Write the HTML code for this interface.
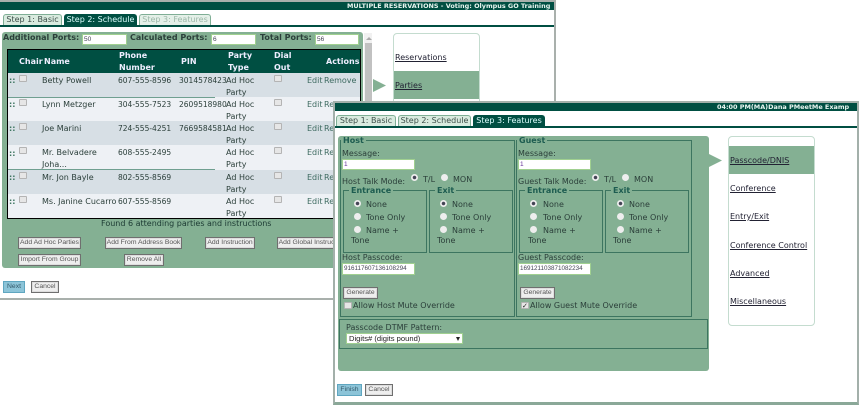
<!DOCTYPE html>
<html><head><meta charset="utf-8"><style>
html,body{margin:0;padding:0;background:#fff}
#r{position:relative;width:860px;height:405px;overflow:hidden;background:#fff;font-family:"DejaVu Sans","Liberation Sans",sans-serif;font-size:8px;color:#2b3f3a;filter:blur(.35px)}
#r div,#r span.t{position:absolute;box-sizing:border-box}
.t{position:absolute;white-space:nowrap;line-height:10px;margin-top:1px}
.b{font-weight:bold}
.n{font-size:7.500px}
.tab{height:12px;border:1px solid #7fae95;border-bottom:0;border-radius:3px 3px 0 0;background:#d9ebdf;color:#3e4f4a;line-height:10px;text-align:center;white-space:nowrap}
.tab.a{background:#004f42;color:#dff;border-color:#004f42}
.tab.d{color:#9db8a9;background:#e4f0e8}
.in{background:#fff;border:1px solid #a0d090;font-family:"Liberation Sans",sans-serif;font-size:6.500px;line-height:10px;padding-left:1px;color:#445;white-space:nowrap;overflow:hidden}
.btn{background:#eee;border:1px solid #6f6f6f;box-shadow:inset 0 0 0 1px #ddd;font-family:"Liberation Sans",sans-serif;font-size:6.800px;color:#555;text-align:center;line-height:10px;white-space:nowrap;overflow:hidden}
.blue{background:#8cc4d8;border-color:#5fa6c0;box-shadow:none;color:#33596a}
.fs{border:1px solid #3d7560}
.lg{background:#84b093;padding:0 2px;font-weight:bold;color:#1d5c50;line-height:10px;white-space:nowrap;margin-top:0}
.cb{width:8px;height:7px;background:#e6e6e6;border:1px solid #b4b4b4;border-radius:1px}
.rd{width:7px;height:7px;border-radius:50%;background:#eee}
.rd.on{background:radial-gradient(circle,#445 0 1.500px,#eee 2px)}
.row{left:8px;width:352px;height:24px}
a{color:#223;text-decoration:underline}
</style></head><body><div id="r">

<!-- WINDOW 1 -->
<div style="left:0;top:0;width:556px;height:300px;border:1px solid #a9b0ac;border-width:2px 2px 2px 0;background:#fff"></div>
<div style="left:0;top:2px;width:554px;height:8px;background:#004f42"></div>
<span class="t b" style="left:347px;top:0px;color:#e8f5f0;font-size:6.450px;">MULTIPLE RESERVATIONS - Voting: Olympus GO Training</span>
<div class="tab" style="left:3px;top:14px;width:59px">Step 1: Basic</div>
<div class="tab a" style="left:64px;top:14px;width:73px">Step 2: Schedule</div>
<div class="tab d" style="left:139px;top:14px;width:72px">Step 3: Features</div>
<div style="left:0;top:25px;width:554px;height:2px;background:#004f42"></div>

<div style="left:2px;top:32px;width:361px;height:236px;background:#84b093;border-radius:3px"></div>
<span class="t b" style="left:3px;top:32px">Additional Ports:</span>
<div class="in" style="left:82px;top:34px;width:45px;height:11px">50</div>
<span class="t b" style="left:130px;top:32px">Calculated Ports:</span>
<div class="in" style="left:211px;top:34px;width:45px;height:11px">6</div>
<span class="t b" style="left:260px;top:32px">Total Ports:</span>
<div class="in" style="left:315px;top:34px;width:44px;height:11px">56</div>

<div style="left:7px;top:49px;width:354px;height:170px;border:1px solid #000;background:#eef1f5"></div>
<div style="left:8px;top:50px;width:352px;height:23px;background:#004f42"></div>
<span class="t b" style="left:19px;top:56px;color:#eef">Chair</span>
<span class="t b" style="left:44px;top:56px;color:#eef">Name</span>
<span class="t b" style="left:119px;top:50px;color:#eef">Phone</span>
<span class="t b" style="left:119px;top:62px;color:#eef">Number</span>
<span class="t b" style="left:181px;top:56px;color:#eef">PIN</span>
<span class="t b" style="left:228px;top:50px;color:#eef">Party</span>
<span class="t b" style="left:228px;top:62px;color:#eef">Type</span>
<span class="t b" style="left:274px;top:50px;color:#eef">Dial</span>
<span class="t b" style="left:274px;top:62px;color:#eef">Out</span>
<span class="t b" style="left:326px;top:56px;color:#eef">Actions</span>

<div class="row" style="top:73px;background:#d7dfe5"></div>
<div class="row" style="top:97px;background:#eef1f5"></div>
<div class="row" style="top:121px;background:#d7dfe5"></div>
<div class="row" style="top:145px;background:#eef1f5"></div>
<div class="row" style="top:170px;background:#d7dfe5"></div>
<div class="row" style="top:194px;background:#eef1f5"></div>
<div style="left:8px;top:97px;width:207px;height:1px;background:#6f9f90"></div>
<div style="left:8px;top:169px;width:207px;height:1px;background:#6f9f90"></div>

<span class="t b" style="left:9px;top:75px;color:#3d7560">::</span><div class="cb" style="left:19px;top:75px"></div><span class="t" style="left:42px;top:75px">Betty Powell</span><span class="t n" style="left:118px;top:75px">607-555-8596</span><span class="t n" style="left:179px;top:75px">3014578423</span><span class="t" style="left:226px;top:75px">Ad Hoc</span><span class="t" style="left:226px;top:87px">Party</span><div class="cb" style="left:274px;top:75px"></div><span class="t" style="left:307px;top:75px;color:#3d6a60">Edit</span><span class="t" style="left:324px;top:75px;color:#3d6a60">Remove</span>

<span class="t b" style="left:9px;top:99px;color:#3d7560">::</span><div class="cb" style="left:19px;top:99px"></div><span class="t" style="left:42px;top:99px">Lynn Metzger</span><span class="t n" style="left:118px;top:99px">304-555-7523</span><span class="t n" style="left:179px;top:99px">2609518980</span><span class="t" style="left:226px;top:99px">Ad Hoc</span><span class="t" style="left:226px;top:111px">Party</span><div class="cb" style="left:274px;top:99px"></div><span class="t" style="left:307px;top:99px;color:#3d6a60">Edit</span><span class="t" style="left:324px;top:99px;color:#3d6a60">Remove</span>

<span class="t b" style="left:9px;top:123px;color:#3d7560">::</span><div class="cb" style="left:19px;top:123px"></div><span class="t" style="left:42px;top:123px">Joe Marini</span><span class="t n" style="left:118px;top:123px">724-555-4251</span><span class="t n" style="left:179px;top:123px">7669584581</span><span class="t" style="left:226px;top:123px">Ad Hoc</span><span class="t" style="left:226px;top:135px">Party</span><div class="cb" style="left:274px;top:123px"></div><span class="t" style="left:307px;top:123px;color:#3d6a60">Edit</span><span class="t" style="left:324px;top:123px;color:#3d6a60">Remove</span>

<span class="t b" style="left:9px;top:148px;color:#3d7560">::</span><div class="cb" style="left:19px;top:147px"></div><span class="t" style="left:42px;top:147px">Mr. Belvadere</span><span class="t" style="left:42px;top:159px">Joha...</span><span class="t n" style="left:118px;top:147px">608-555-2495</span><span class="t" style="left:226px;top:147px">Ad Hoc</span><span class="t" style="left:226px;top:159px">Party</span><div class="cb" style="left:274px;top:147px"></div><span class="t" style="left:307px;top:147px;color:#3d6a60">Edit</span><span class="t" style="left:324px;top:147px;color:#3d6a60">Remove</span>

<span class="t b" style="left:9px;top:172px;color:#3d7560">::</span><div class="cb" style="left:19px;top:172px"></div><span class="t" style="left:42px;top:172px">Mr. Jon Bayle</span><span class="t n" style="left:118px;top:172px">802-555-8569</span><span class="t" style="left:226px;top:172px">Ad Hoc</span><span class="t" style="left:226px;top:184px">Party</span><div class="cb" style="left:274px;top:172px"></div><span class="t" style="left:307px;top:172px;color:#3d6a60">Edit</span><span class="t" style="left:324px;top:172px;color:#3d6a60">Remove</span>

<span class="t b" style="left:9px;top:196px;color:#3d7560">::</span><div class="cb" style="left:19px;top:196px"></div><span class="t" style="left:42px;top:196px">Ms. Janine Cucarro</span><span class="t n" style="left:118px;top:196px">607-555-8569</span><span class="t" style="left:226px;top:196px">Ad Hoc</span><span class="t" style="left:226px;top:208px">Party</span><div class="cb" style="left:274px;top:196px"></div><span class="t" style="left:307px;top:196px;color:#3d6a60">Edit</span><span class="t" style="left:324px;top:196px;color:#3d6a60">Remove</span>

<span class="t" style="left:101px;top:218px;color:#1c3a33">Found 6 attending parties and instructions</span>
<div class="btn" style="left:18px;top:237px;width:63px;height:12px">Add Ad Hoc Parties</div>
<div class="btn" style="left:105px;top:237px;width:77px;height:12px">Add From Address Book</div>
<div class="btn" style="left:205px;top:237px;width:50px;height:12px">Add Instruction</div>
<div class="btn" style="left:277px;top:237px;width:70px;height:12px">Add Global Instruction</div>
<div class="btn" style="left:18px;top:254px;width:63px;height:12px">Import From Group</div>
<div class="btn" style="left:124px;top:254px;width:40px;height:12px">Remove All</div>
<div class="btn blue" style="left:3px;top:281px;width:22px;height:12px">Next</div>
<div class="btn" style="left:31px;top:281px;width:28px;height:12px">Cancel</div>

<!-- scrollbar -->
<div style="left:364px;top:33px;width:8px;height:235px;background:#f1f1f1"></div>
<div style="left:365px;top:43px;width:7px;height:62px;background:#c1c1c1"></div>
<div style="left:366px;top:37px;border:3px solid transparent;border-bottom:3px solid #aaa;border-top:0"></div>

<!-- menu 1 -->
<svg style="position:absolute;left:373px;top:79px" width="14" height="14"><path d="M0 0L13 6.500L0 13Z" fill="#84b093"/></svg>
<div style="left:393px;top:33px;width:87px;height:72px;border:1px solid #c4dccf;border-radius:4px 4px 0 0;background:#fff"></div>
<div style="left:394px;top:71px;width:85px;height:28px;background:#84b093"></div>
<span class="t" style="left:395px;top:52px"><a>Reservations</a></span>
<span class="t" style="left:395px;top:80px"><a>Parties</a></span>

<!-- WINDOW 2 -->
<div style="left:333px;top:101px;width:526px;height:304px;background:#fff;border:2px solid #a3b0aa;border-bottom:3px solid #8aa898"></div>
<div style="left:335px;top:103px;width:522px;height:8px;background:#004f42"></div>
<span class="t b" style="left:717px;top:101px;color:#e8f5f0;font-size:6.450px">04:00 PM(MA)Dana PMeetMe Examp</span>
<div class="tab" style="left:336px;top:115px;width:60px">Step 1: Basic</div>
<div class="tab" style="left:398px;top:115px;width:73px">Step 2: Schedule</div>
<div class="tab a" style="left:473px;top:115px;width:72px">Step 3: Features</div>
<div style="left:335px;top:126px;width:522px;height:2px;background:#004f42"></div>

<div style="left:338px;top:136px;width:371px;height:235px;background:#84b093;border-radius:3px"></div>

<!-- Host -->
<div class="fs" style="left:340px;top:140px;width:175px;height:177px"></div>
<span class="t lg" style="left:341px;top:136px">Host</span>
<span class="t" style="left:342px;top:148px">Message:</span>
<div class="in" style="left:342px;top:159px;width:73px;height:11px;color:#639">1</div>
<span class="t" style="left:342px;top:176px">Host Talk Mode:</span>
<div class="rd on" style="left:411px;top:174px"></div><span class="t" style="left:423px;top:174px">T/L</span>
<div class="rd" style="left:441px;top:174px"></div><span class="t" style="left:453px;top:174px">MON</span>
<div class="fs" style="left:343px;top:190px;width:84px;height:63px"></div>
<span class="t lg" style="left:349px;top:186px">Entrance</span>
<div class="fs" style="left:429px;top:190px;width:84px;height:63px"></div>
<span class="t lg" style="left:435px;top:186px">Exit</span>
<div class="rd on" style="left:354px;top:200px"></div><span class="t" style="left:366px;top:199px">None</span>
<div class="rd" style="left:354px;top:213px"></div><span class="t" style="left:366px;top:212px">Tone Only</span>
<div class="rd" style="left:354px;top:226px"></div><span class="t" style="left:366px;top:225px">Name +</span><span class="t" style="left:351px;top:235px">Tone</span>
<div class="rd on" style="left:440px;top:200px"></div><span class="t" style="left:452px;top:199px">None</span>
<div class="rd" style="left:440px;top:213px"></div><span class="t" style="left:452px;top:212px">Tone Only</span>
<div class="rd" style="left:440px;top:226px"></div><span class="t" style="left:452px;top:225px">Name +</span><span class="t" style="left:437px;top:235px">Tone</span>
<span class="t" style="left:342px;top:252px">Host Passcode:</span>
<div class="in" style="left:342px;top:263px;width:73px;height:12px;font-size:6.300px">916117607136108294</div>
<div class="btn" style="left:343px;top:287px;width:35px;height:12px">Generate</div>
<div class="cb" style="left:344px;top:302px"></div>
<span class="t" style="left:353px;top:300px">Allow Host Mute Override</span>

<!-- Guest -->
<div class="fs" style="left:516px;top:140px;width:176px;height:177px"></div>
<span class="t lg" style="left:517px;top:136px">Guest</span>
<span class="t" style="left:518px;top:148px">Message:</span>
<div class="in" style="left:518px;top:159px;width:73px;height:11px;color:#639">1</div>
<span class="t" style="left:518px;top:176px">Guest Talk Mode:</span>
<div class="rd on" style="left:592px;top:174px"></div><span class="t" style="left:604px;top:174px">T/L</span>
<div class="rd" style="left:622px;top:174px"></div><span class="t" style="left:634px;top:174px">MON</span>
<div class="fs" style="left:519px;top:190px;width:84px;height:63px"></div>
<span class="t lg" style="left:525px;top:186px">Entrance</span>
<div class="fs" style="left:605px;top:190px;width:84px;height:63px"></div>
<span class="t lg" style="left:611px;top:186px">Exit</span>
<div class="rd on" style="left:530px;top:200px"></div><span class="t" style="left:543px;top:199px">None</span>
<div class="rd" style="left:530px;top:213px"></div><span class="t" style="left:543px;top:212px">Tone Only</span>
<div class="rd" style="left:530px;top:226px"></div><span class="t" style="left:543px;top:225px">Name +</span><span class="t" style="left:528px;top:235px">Tone</span>
<div class="rd on" style="left:617px;top:200px"></div><span class="t" style="left:629px;top:199px">None</span>
<div class="rd" style="left:617px;top:213px"></div><span class="t" style="left:629px;top:212px">Tone Only</span>
<div class="rd" style="left:617px;top:226px"></div><span class="t" style="left:629px;top:225px">Name +</span><span class="t" style="left:613px;top:235px">Tone</span>
<span class="t" style="left:518px;top:252px">Guest Passcode:</span>
<div class="in" style="left:518px;top:263px;width:73px;height:12px;font-size:6.300px">169121103871082234</div>
<div class="btn" style="left:520px;top:287px;width:35px;height:12px">Generate</div>
<div class="cb" style="left:521px;top:302px;color:#222;font-size:7px;line-height:6px">&#10003;</div>
<span class="t" style="left:530px;top:300px">Allow Guest Mute Override</span>

<!-- DTMF -->
<div class="fs" style="left:339px;top:319px;width:369px;height:30px"></div>
<span class="t" style="left:346px;top:322px">Passcode DTMF Pattern:</span>
<div class="in" style="left:346px;top:333px;width:117px;height:11px;font-size:7.600px;padding-left:2px;color:#222;line-height:9px">Digits# (digits pound)</div>
<div style="left:456px;top:337px;border:2.500px solid transparent;border-top:4px solid #222;border-bottom:0"></div>

<div class="btn blue" style="left:337px;top:384px;width:25px;height:12px">Finish</div>
<div class="btn" style="left:365px;top:384px;width:28px;height:12px">Cancel</div>

<!-- menu 2 -->
<svg style="position:absolute;left:709px;top:154px" width="14" height="14"><path d="M0 0L13 6.500L0 13Z" fill="#84b093"/></svg>
<div style="left:728px;top:136px;width:87px;height:190px;border:1px solid #c4dccf;border-radius:4px;background:#fff"></div>
<div style="left:729px;top:146px;width:85px;height:28px;background:#84b093"></div>
<span class="t" style="left:730px;top:155px"><a>Passcode/DNIS</a></span>
<span class="t" style="left:730px;top:183px"><a>Conference</a></span>
<span class="t" style="left:730px;top:211px"><a>Entry/Exit</a></span>
<span class="t" style="left:730px;top:240px"><a>Conference Control</a></span>
<span class="t" style="left:730px;top:268px"><a>Advanced</a></span>
<span class="t" style="left:730px;top:296px"><a>Miscellaneous</a></span>
</div></body></html>
